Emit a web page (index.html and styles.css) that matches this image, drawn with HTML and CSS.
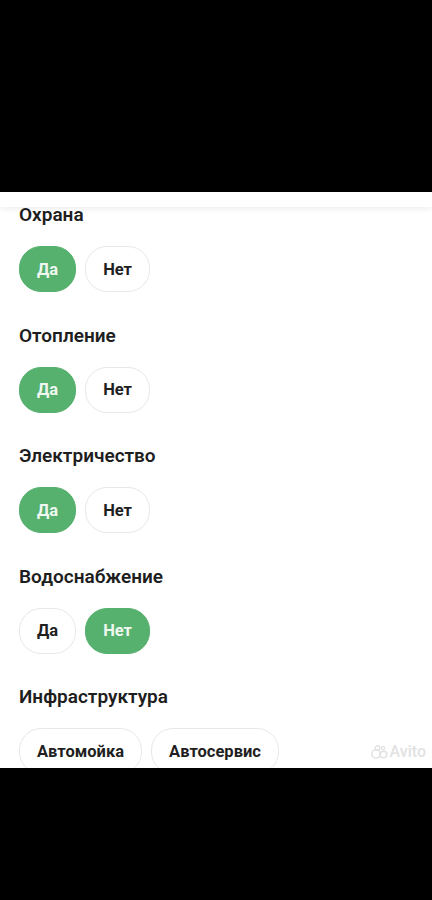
FILE: index.html
```html
<!DOCTYPE html>
<html lang="ru">
  <head>
    <meta charset="UTF-8" />
    <meta name="viewport" content="width=device-width, initial-scale=1.0" />
    <title>Параметры объекта</title>
    <link rel="stylesheet" href="styles.css">
  </head>
  <body>
    <div class="screen">
      <div class="sheet">
        <div class="sheet-header"></div>

        <div class="field">
          <h3>Охрана</h3>
          <div class="options">
            <button class="chip active">Да</button>
            <button class="chip">Нет</button>
          </div>
        </div>

        <div class="field">
          <h3>Отопление</h3>
          <div class="options">
            <button class="chip active">Да</button>
            <button class="chip">Нет</button>
          </div>
        </div>

        <div class="field">
          <h3>Электричество</h3>
          <div class="options">
            <button class="chip active">Да</button>
            <button class="chip">Нет</button>
          </div>
        </div>

        <div class="field">
          <h3>Водоснабжение</h3>
          <div class="options">
            <button class="chip">Да</button>
            <button class="chip active">Нет</button>
          </div>
        </div>

        <div class="field">
          <h3>Инфраструктура</h3>
          <div class="options">
            <button class="chip">Автомойка</button>
            <button class="chip">Автосервис</button>
          </div>
        </div>

        <div class="watermark">
          <svg width="18" height="14" viewBox="0 0 18 14">
            <circle cx="5" cy="9" r="4.2" fill="none" stroke="#e2e2e2" stroke-width="1.6" />
            <circle cx="12.5" cy="9.5" r="3.3" fill="none" stroke="#e2e2e2" stroke-width="1.6" />
            <circle cx="6.5" cy="3" r="2.2" fill="none" stroke="#e2e2e2" stroke-width="1.4" />
            <circle cx="12" cy="3.2" r="1.6" fill="none" stroke="#e2e2e2" stroke-width="1.3" />
          </svg>
          <span>Avito</span>
        </div>
      </div>
    </div>
  </body>
</html>
```

FILE: styles.css
```css
/* Photo of a phone screen: black bands above and below the form */
body {
  margin: 0;
  background-color: #000;
  font-family: Roboto, "Noto Sans", sans-serif;
}
.screen {
  padding: 192px 0 132px;
}
.sheet {
  position: relative;
  height: 576px;
  overflow: hidden;
  background-color: #fff;
  padding: 11px 19px 0;
  box-sizing: border-box;
}
.sheet-header {
  position: absolute;
  top: 0;
  left: 0;
  right: 0;
  height: 15px;
  background-color: #fff;
  box-shadow: 0 2px 6px rgba(0, 0, 0, 0.07);
  z-index: 1;
}
.field {
  margin-bottom: 31.5px;
}
.field h3 {
  margin: 0 0 19px;
  font-size: 19px;
  line-height: 24px;
  font-weight: 600;
  color: #1e1e1e;
}
.options {
  display: flex;
  gap: 9px;
}
.chip {
  height: 46px;
  padding: 0 17px;
  border: 1.5px solid #e8e8e8;
  border-radius: 22px;
  background-color: #fff;
  font-family: inherit;
  font-size: 16.5px;
  font-weight: 700;
  color: #1f1f1f;
}
.chip.active {
  background-color: #56b06e;
  border-color: #56b06e;
  color: #eef8f0;
}
.field:last-of-type .options {
  gap: 10px;
}
.watermark {
  position: absolute;
  right: 6px;
  bottom: 7px;
  display: flex;
  align-items: center;
  gap: 1px;
  color: #e2e2e2;
  font-size: 16px;
  font-weight: 500;
}
```
